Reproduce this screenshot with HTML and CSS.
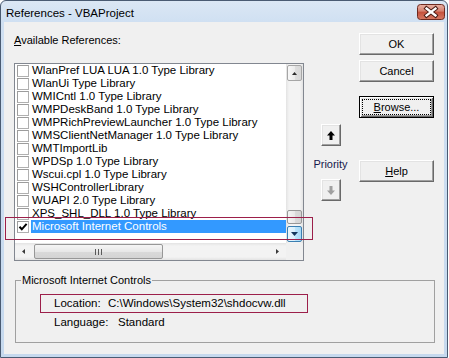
FILE: index.html
```html
<!DOCTYPE html>
<html>
<head>
<meta charset="utf-8">
<title>References - VBAProject</title>
<link rel="stylesheet" href="styles.css">
</head>
<body>
<div class="window">
  <div class="titlebar">
    <span class="title">References - VBAProject</span>
    <span class="close">
      <svg width="28" height="16" viewBox="0 0 28 16">
        <defs>
          <linearGradient id="cg" x1="0" y1="0" x2="0" y2="1">
            <stop offset="0" stop-color="#eab3a6"/>
            <stop offset="0.45" stop-color="#d5806e"/>
            <stop offset="0.5" stop-color="#c4513c"/>
            <stop offset="1" stop-color="#d77a64"/>
          </linearGradient>
        </defs>
        <rect x="0.5" y="0.5" width="27" height="15" rx="3" fill="url(#cg)" stroke="#6e2a20"/>
        <path d="M9.5 4.5 L18.5 11.5 M18.5 4.5 L9.5 11.5" stroke="#4a1c16" stroke-width="4.2" stroke-linecap="square"/>
        <path d="M9.5 4.5 L18.5 11.5 M18.5 4.5 L9.5 11.5" stroke="#fff" stroke-width="2.3" stroke-linecap="square"/>
      </svg>
    </span>
  </div>
  <div class="client">
    <div class="top">
      <div class="left">
        <div class="label"><u>A</u>vailable References:</div>
        <div class="listbox">
          <ul class="rows">
            <li class="row"><span class="cb"></span><span class="txt">WlanPref LUA LUA 1.0 Type Library</span></li>
            <li class="row"><span class="cb"></span><span class="txt">WlanUi Type Library</span></li>
            <li class="row"><span class="cb"></span><span class="txt">WMICntl 1.0 Type Library</span></li>
            <li class="row"><span class="cb"></span><span class="txt">WMPDeskBand 1.0 Type Library</span></li>
            <li class="row"><span class="cb"></span><span class="txt">WMPRichPreviewLauncher 1.0 Type Library</span></li>
            <li class="row"><span class="cb"></span><span class="txt">WMSClientNetManager 1.0 Type Library</span></li>
            <li class="row"><span class="cb"></span><span class="txt">WMTImportLib</span></li>
            <li class="row"><span class="cb"></span><span class="txt">WPDSp 1.0 Type Library</span></li>
            <li class="row"><span class="cb"></span><span class="txt">Wscui.cpl 1.0 Type Library</span></li>
            <li class="row"><span class="cb"></span><span class="txt">WSHControllerLibrary</span></li>
            <li class="row"><span class="cb"></span><span class="txt">WUAPI 2.0 Type Library</span></li>
            <li class="row"><span class="cb"></span><span class="txt">XPS_SHL_DLL 1.0 Type Library</span></li>
            <li class="row selected"><span class="cb"><svg width="10" height="10" viewBox="0 0 10 10"><path d="M1.5 4.8 L3.8 7.3 L8.6 1.8" fill="none" stroke="#000" stroke-width="2"/></svg></span><span class="txt">Microsoft Internet Controls</span></li>
          </ul>
          <div class="vscroll">
            <span class="sbtn"><svg width="5" height="3" viewBox="0 0 5 3"><path d="M0 3 L2.5 0 L5 3 Z" fill="#2b2b2b"/></svg></span>
            <span class="vtrack"></span>
            <span class="vthumb"></span>
            <span class="sbtn hover"><svg width="7" height="4" viewBox="0 0 7 4"><path d="M0 0 L7 0 L3.5 4 Z" fill="#15375c"/></svg></span>
          </div>
          <div class="hscroll">
            <span class="harrow"><svg width="3" height="5" viewBox="0 0 3 5"><path d="M3 0 L0 2.5 L3 5 Z" fill="#3a3a3a"/></svg></span>
            <span class="hthumb"><svg width="8" height="6" viewBox="0 0 8 6"><path d="M0.5 0 V6 M3.5 0 V6 M6.5 0 V6" stroke="#5a5a5a" stroke-width="1"/></svg></span>
            <span class="htrack"></span>
            <span class="harrow"><svg width="3" height="5" viewBox="0 0 3 5"><path d="M0 0 L3 2.5 L0 5 Z" fill="#3a3a3a"/></svg></span>
          </div>
          <div class="corner"></div>
        </div>
      </div>
      <div class="priority">
        <span class="btn arrowbtn"><svg width="8" height="9" viewBox="0 0 8 9"><path d="M4 0 L8 4.5 L5.5 4.5 L5.5 9 L2.5 9 L2.5 4.5 L0 4.5 Z" fill="#000"/></svg></span>
        <span class="plabel">Priority</span>
        <span class="btn arrowbtn"><svg width="8" height="9" viewBox="0 0 8 9"><path d="M4 9 L8 4.5 L5.5 4.5 L5.5 0 L2.5 0 L2.5 4.5 L0 4.5 Z" fill="#a0a0a0"/></svg></span>
      </div>
      <div class="buttons">
        <span class="btn">OK</span>
        <span class="btn gap5">Cancel</span>
        <span class="btn focus gap14"><span class="focusrect"><u>B</u>rowse...</span></span>
        <span class="btn gap42"><u>H</u>elp</span>
      </div>
    </div>
    <fieldset class="group">
      <legend>Microsoft Internet Controls</legend>
      <div class="info">
        <div class="irow"><span class="ilabel loc">Location:</span><span>C:\Windows\System32\shdocvw.dll</span></div>
        <div class="irow"><span class="ilabel lang">Language:</span><span>Standard</span></div>
      </div>
    </fieldset>
  </div>
  <div class="mark mark-list"></div>
  <div class="mark mark-loc"></div>
</div>
</body>
</html>
```

FILE: styles.css
```css
html, body {
  margin: 0;
  padding: 0;
  background: #fff;
}
body {
  font-family: "Liberation Sans", Arial, sans-serif;
  font-size: 11px;
  color: #000;
}
.window {
  position: relative;
  width: 446px;
  height: 356px;
  border: 1px solid #4a5b72;
  border-radius: 6px 6px 0 0;
  background: linear-gradient(#dbe7f4, #d0e0f2 21px, #c6d9ee);
  display: flex;
  flex-direction: column;
}
.titlebar {
  height: 21px;
  display: flex;
  align-items: flex-start;
}
.title {
  margin: 5px 0 0 5px;
  font-size: 11.5px;
  line-height: 14px;
  color: #000;
}
.close {
  margin: 3px 2px 0 auto;
  height: 16px;
  display: block;
}
.close svg { display: block; }
.client {
  margin: 0 3px 0 3px;
  width: 440px;
  height: 332px;
  box-sizing: border-box;
  background: #f0f0f0;
  padding: 11px 10px 0 10px;
}
.top {
  display: flex;
  align-items: flex-start;
}
.left {
  width: 290px;
}
.label {
  margin-top: 1px;
  height: 13px;
  line-height: 13px;
  margin-bottom: 16px;
}
.listbox {
  width: 290px;
  height: 198px;
  box-sizing: border-box;
  border: 1px solid #828790;
  background: #fff;
  display: grid;
  grid-template-columns: 271px 17px;
  grid-template-rows: 179px 17px;
}
.rows {
  list-style: none;
  margin: 0;
  padding: 0;
  overflow: hidden;
}
.row {
  height: 13px;
  display: flex;
  align-items: flex-start;
  padding-left: 2px;
}
.cb {
  width: 12px;
  height: 12px;
  box-sizing: border-box;
  border: 1px solid #b0b0b0;
  border-top-color: #9c9c9c;
  border-left-color: #9c9c9c;
  background: #fff;
  margin-top: 1px;
  margin-right: 2px;
  display: flex;
  align-items: center;
  justify-content: center;
}
.cb svg { display: block; }
.txt {
  flex: 1;
  font-size: 11.5px;
  line-height: 13px;
  padding-left: 1px;
  white-space: nowrap;
}
.selected .txt {
  background: #3399ff;
  color: #fff;
}
.vscroll {
  display: flex;
  flex-direction: column;
  align-items: center;
  padding: 1px 0;
  background: linear-gradient(to right, #e3e3e3, #f3f3f3 3px, #f3f3f3 14px, #e3e3e3);
}
.sbtn {
  width: 15px;
  height: 16px;
  box-sizing: border-box;
  border: 1px solid #a6a6a6;
  border-radius: 2px;
  background: linear-gradient(to right, #f8f8f8, #ececec 50%, #dedede 51%, #d8d8d8);
  display: flex;
  align-items: center;
  justify-content: center;
}
.sbtn.hover {
  border-color: #3c7fb1;
  background: linear-gradient(to right, #eaf6fd, #d9f0fc 50%, #bee6fd 51%, #a7d9f5);
}
.vtrack { flex: 1; }
.vthumb {
  width: 15px;
  height: 14px;
  box-sizing: border-box;
  border: 1px solid #979797;
  border-radius: 2px;
  background: linear-gradient(to right, #f5f5f5, #e8e8e8 50%, #dadada 51%, #d4d4d4);
  margin-bottom: 2px;
}
.hscroll {
  display: flex;
  align-items: center;
  background: linear-gradient(#e3e3e3, #f3f3f3 3px, #f3f3f3 14px, #e3e3e3);
}
.harrow {
  width: 17px;
  height: 17px;
  display: flex;
  align-items: center;
  justify-content: center;
}
.hthumb {
  width: 129px;
  height: 15px;
  margin-left: 2px;
  box-sizing: border-box;
  border: 1px solid #979797;
  border-radius: 2px;
  background: linear-gradient(#f5f5f5, #e8e8e8 50%, #dadada 51%, #d4d4d4);
  display: flex;
  align-items: center;
  justify-content: center;
}
.hthumb svg { display: block; }
.htrack { flex: 1; }
.corner { background: #f0f0f0; }
.priority {
  width: 40px;
  margin-left: 7px;
  display: flex;
  flex-direction: column;
  align-items: center;
}
.plabel {
  margin-top: 12px;
  margin-bottom: 8px;
  line-height: 13px;
  color: #16184c;
}
.buttons {
  width: 75px;
  margin-left: 9px;
  display: flex;
  flex-direction: column;
}
.btn {
  width: 75px;
  height: 22px;
  box-sizing: border-box;
  background: #f0f0f0;
  border: 1px solid;
  border-color: #fff #696969 #696969 #fff;
  box-shadow: inset -1px -1px #a0a0a0, inset 1px 1px #e3e3e3;
  display: flex;
  align-items: center;
  justify-content: center;
  line-height: 13px;
}
.arrowbtn {
  width: 20px;
  height: 22px;
}
.priority .arrowbtn:first-child { margin-top: 91px; }
.gap5 { margin-top: 5px; }
.gap14 { margin-top: 14px; }
.gap42 { margin-top: 42px; }
.btn.focus {
  border: 1px solid #000;
  box-shadow: inset 1px 1px #fff, inset -1px -1px #696969, inset 2px 2px #e3e3e3, inset -2px -2px #a0a0a0;
  align-items: stretch;
  padding: 2px;
}
.focusrect {
  flex: 1;
  border: 1px dotted #000;
  display: flex;
  align-items: center;
  justify-content: center;
}
.group {
  margin: 13px 0 0 1px;
  width: 420px;
  box-sizing: border-box;
  border: 1px solid #a0a0a0;
  padding: 0 0 13px 5px;
  min-width: 0;
}
.group legend {
  padding: 0 1px;
  line-height: 13px;
}
.info {
  margin: 10px 0 0 33px;
  display: flex;
  flex-direction: column;
  gap: 6px;
}
.irow {
  display: flex;
  font-size: 11.5px;
  line-height: 13px;
}
.ilabel.loc { width: 54px; }
.ilabel.lang { width: 64px; }
.mark {
  position: absolute;
  box-sizing: border-box;
  border: 1px solid #9c1f4a;
}
.mark-list {
  left: 4px;
  top: 216px;
  width: 308px;
  height: 23px;
}
.mark-loc {
  left: 39px;
  top: 293px;
  width: 268px;
  height: 19px;
}
```
